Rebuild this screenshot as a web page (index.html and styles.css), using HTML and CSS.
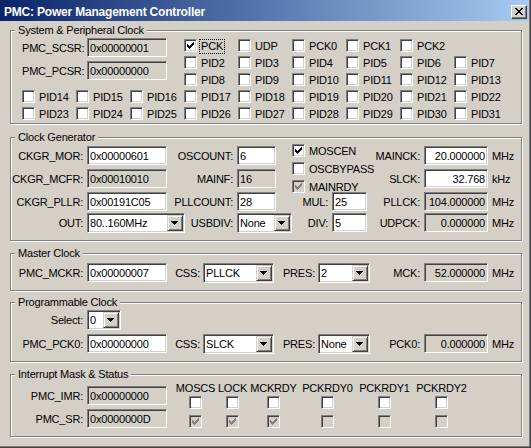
FILE: index.html
```html
<!DOCTYPE html>
<html lang="en">
<head>
<meta charset="utf-8">
<title>PMC: Power Management Controller</title>
<link rel="stylesheet" href="styles.css">
</head>
<body>
<div class="window">
<div class="frame">
  <div class="titlebar">
    <span class="title">PMC: Power Management Controller</span>
    <span class="close"><svg width="14" height="12" viewBox="0 0 14 12"><path d="M3 2h2v1h-2z M9 2h2v1h-2z M4 3h2v1h-2z M8 3h2v1h-2z M5 4h4v1h-4z M6 5h2v1h-2z M5 6h4v1h-4z M4 7h2v1h-2z M8 7h2v1h-2z M3 8h2v1h-2z M9 8h2v1h-2z"/></svg></span>
  </div>
  <div class="client">

    <fieldset class="group g-sys">
      <legend>System &amp; Peripheral Clock</legend>
      <div class="sys-grid">
        <div class="regs">
          <span class="lbl">PMC_SCSR:</span><span class="edit ro">0x00000001</span>
          <span class="lbl">PMC_PCSR:</span><span class="edit ro">0x00000000</span>
        </div>
        <span class="cb"><span class="box"><svg width="11" height="11" viewBox="0 0 11 11"><path d="M2 4h1v3h-1z M3 5h1v3h-1z M4 6h1v3h-1z M5 5h1v3h-1z M6 4h1v3h-1z M7 3h1v3h-1z M8 2h1v3h-1z"/></svg></span><span class="txt focus">PCK</span></span>
        <span class="cb"><span class="box"></span><span class="txt">UDP</span></span>
        <span class="cb"><span class="box"></span><span class="txt">PCK0</span></span>
        <span class="cb"><span class="box"></span><span class="txt">PCK1</span></span>
        <span class="cb"><span class="box"></span><span class="txt">PCK2</span></span>

        <span class="cb c4"><span class="box"></span><span class="txt">PID2</span></span>
        <span class="cb"><span class="box"></span><span class="txt">PID3</span></span>
        <span class="cb"><span class="box"></span><span class="txt">PID4</span></span>
        <span class="cb"><span class="box"></span><span class="txt">PID5</span></span>
        <span class="cb"><span class="box"></span><span class="txt">PID6</span></span>
        <span class="cb"><span class="box"></span><span class="txt">PID7</span></span>

        <span class="cb c4"><span class="box"></span><span class="txt">PID8</span></span>
        <span class="cb"><span class="box"></span><span class="txt">PID9</span></span>
        <span class="cb"><span class="box"></span><span class="txt">PID10</span></span>
        <span class="cb"><span class="box"></span><span class="txt">PID11</span></span>
        <span class="cb"><span class="box"></span><span class="txt">PID12</span></span>
        <span class="cb"><span class="box"></span><span class="txt">PID13</span></span>

        <span class="cb c1"><span class="box"></span><span class="txt">PID14</span></span>
        <span class="cb"><span class="box"></span><span class="txt">PID15</span></span>
        <span class="cb"><span class="box"></span><span class="txt">PID16</span></span>
        <span class="cb"><span class="box"></span><span class="txt">PID17</span></span>
        <span class="cb"><span class="box"></span><span class="txt">PID18</span></span>
        <span class="cb"><span class="box"></span><span class="txt">PID19</span></span>
        <span class="cb"><span class="box"></span><span class="txt">PID20</span></span>
        <span class="cb"><span class="box"></span><span class="txt">PID21</span></span>
        <span class="cb"><span class="box"></span><span class="txt">PID22</span></span>

        <span class="cb c1"><span class="box"></span><span class="txt">PID23</span></span>
        <span class="cb"><span class="box"></span><span class="txt">PID24</span></span>
        <span class="cb"><span class="box"></span><span class="txt">PID25</span></span>
        <span class="cb"><span class="box"></span><span class="txt">PID26</span></span>
        <span class="cb"><span class="box"></span><span class="txt">PID27</span></span>
        <span class="cb"><span class="box"></span><span class="txt">PID28</span></span>
        <span class="cb"><span class="box"></span><span class="txt">PID29</span></span>
        <span class="cb"><span class="box"></span><span class="txt">PID30</span></span>
        <span class="cb"><span class="box"></span><span class="txt">PID31</span></span>
      </div>
    </fieldset>

    <fieldset class="group g-clk">
      <legend>Clock Generator</legend>
      <div class="clk-grid">
        <div class="stack">
          <span class="cb"><span class="box"><svg width="11" height="11" viewBox="0 0 11 11"><path d="M2 4h1v3h-1z M3 5h1v3h-1z M4 6h1v3h-1z M5 5h1v3h-1z M6 4h1v3h-1z M7 3h1v3h-1z M8 2h1v3h-1z"/></svg></span><span class="txt">MOSCEN</span></span>
          <span class="cb"><span class="box"></span><span class="txt">OSCBYPASS</span></span>
          <span class="cb"><span class="box dis"><svg width="11" height="11" viewBox="0 0 11 11"><path d="M2 4h1v3h-1z M3 5h1v3h-1z M4 6h1v3h-1z M5 5h1v3h-1z M6 4h1v3h-1z M7 3h1v3h-1z M8 2h1v3h-1z"/></svg></span><span class="txt">MAINRDY</span></span>
        </div>

        <span class="lbl">CKGR_MOR:</span>
        <span class="edit">0x00000601</span>
        <span class="lbl">OSCOUNT:</span>
        <span class="edit w39">6</span>
        <span class="lbl">MAINCK:</span>
        <span class="edit num">20.000000</span>
        <span class="unit">MHz</span>

        <span class="lbl">CKGR_MCFR:</span>
        <span class="edit ro">0x00010010</span>
        <span class="lbl">MAINF:</span>
        <span class="edit ro w39">16</span>
        <span class="lbl">SLCK:</span>
        <span class="edit num">32.768</span>
        <span class="unit">kHz</span>

        <span class="lbl">CKGR_PLLR:</span>
        <span class="edit">0x00191C05</span>
        <span class="lbl">PLLCOUNT:</span>
        <span class="edit w39">28</span>
        <span class="lbl">MUL:</span>
        <span class="edit w35">25</span>
        <span class="lbl">PLLCK:</span>
        <span class="edit ro num">104.000000</span>
        <span class="unit">MHz</span>

        <span class="lbl r4">OUT:</span>
        <span class="combo w98 r4"><span class="ctext">80..160MHz</span><span class="drop"><svg width="14" height="14" viewBox="0 0 14 14"><path d="M3 5h7v1h-1v1h-1v1h-1v1h-1v-1h-1v-1h-1v-1h-1z"/></svg></span></span>
        <span class="lbl r4">USBDIV:</span>
        <span class="combo w55 r4"><span class="ctext">None</span><span class="drop"><svg width="14" height="14" viewBox="0 0 14 14"><path d="M3 5h7v1h-1v1h-1v1h-1v1h-1v-1h-1v-1h-1v-1h-1z"/></svg></span></span>
        <span class="lbl r4">DIV:</span>
        <span class="edit w35 r4">5</span>
        <span class="lbl r4">UDPCK:</span>
        <span class="edit ro num r4">0.000000</span>
        <span class="unit r4">MHz</span>
      </div>
    </fieldset>

    <fieldset class="group g-mck">
      <legend>Master Clock</legend>
      <div class="mck-grid">
        <span class="lbl">PMC_MCKR:</span>
        <span class="edit">0x00000007</span>
        <span class="lbl p3">CSS:</span>
        <span class="combo w71"><span class="ctext">PLLCK</span><span class="drop"><svg width="14" height="14" viewBox="0 0 14 14"><path d="M3 5h7v1h-1v1h-1v1h-1v1h-1v-1h-1v-1h-1v-1h-1z"/></svg></span></span>
        <span class="lbl p3">PRES:</span>
        <span class="combo w52"><span class="ctext">2</span><span class="drop"><svg width="14" height="14" viewBox="0 0 14 14"><path d="M3 5h7v1h-1v1h-1v1h-1v1h-1v-1h-1v-1h-1v-1h-1z"/></svg></span></span>
        <span class="lbl">MCK:</span>
        <span class="edit ro num">52.000000</span>
        <span class="unit">MHz</span>
      </div>
    </fieldset>

    <fieldset class="group g-pck">
      <legend>Programmable Clock</legend>
      <div class="pck-grid">
        <span class="lbl">Select:</span>
        <span class="combo w34"><span class="ctext">0</span><span class="drop"><svg width="14" height="14" viewBox="0 0 14 14"><path d="M3 5h7v1h-1v1h-1v1h-1v1h-1v-1h-1v-1h-1v-1h-1z"/></svg></span></span>

        <span class="lbl c1">PMC_PCK0:</span>
        <span class="edit">0x00000000</span>
        <span class="lbl p3">CSS:</span>
        <span class="combo w71"><span class="ctext">SLCK</span><span class="drop"><svg width="14" height="14" viewBox="0 0 14 14"><path d="M3 5h7v1h-1v1h-1v1h-1v1h-1v-1h-1v-1h-1v-1h-1z"/></svg></span></span>
        <span class="lbl p3">PRES:</span>
        <span class="combo w52"><span class="ctext">None</span><span class="drop"><svg width="14" height="14" viewBox="0 0 14 14"><path d="M3 5h7v1h-1v1h-1v1h-1v1h-1v-1h-1v-1h-1v-1h-1z"/></svg></span></span>
        <span class="lbl">PCK0:</span>
        <span class="edit ro num">0.000000</span>
        <span class="unit">MHz</span>
      </div>
    </fieldset>

    <fieldset class="group g-irq">
      <legend>Interrupt Mask &amp; Status</legend>
      <div class="irq">
        <div class="irq-regs">
          <span class="lbl">PMC_IMR:</span><span class="edit ro">0x00000000</span>
          <span class="lbl">PMC_SR:</span><span class="edit ro">0x0000000D</span>
        </div>
        <div class="flags">
          <div class="flag f-moscs">
            <span class="hd">MOSCS</span>
            <span class="box"></span>
            <span class="box dis"><svg width="11" height="11" viewBox="0 0 11 11"><path d="M2 4h1v3h-1z M3 5h1v3h-1z M4 6h1v3h-1z M5 5h1v3h-1z M6 4h1v3h-1z M7 3h1v3h-1z M8 2h1v3h-1z"/></svg></span>
          </div>
          <div class="flag f-lock">
            <span class="hd">LOCK</span>
            <span class="box"></span>
            <span class="box dis"><svg width="11" height="11" viewBox="0 0 11 11"><path d="M2 4h1v3h-1z M3 5h1v3h-1z M4 6h1v3h-1z M5 5h1v3h-1z M6 4h1v3h-1z M7 3h1v3h-1z M8 2h1v3h-1z"/></svg></span>
          </div>
          <div class="flag f-mckrdy">
            <span class="hd">MCKRDY</span>
            <span class="box"></span>
            <span class="box dis"><svg width="11" height="11" viewBox="0 0 11 11"><path d="M2 4h1v3h-1z M3 5h1v3h-1z M4 6h1v3h-1z M5 5h1v3h-1z M6 4h1v3h-1z M7 3h1v3h-1z M8 2h1v3h-1z"/></svg></span>
          </div>
          <div class="flag f-rdy0">
            <span class="hd">PCKRDY0</span>
            <span class="box"></span>
            <span class="box dis"></span>
          </div>
          <div class="flag f-rdy1">
            <span class="hd">PCKRDY1</span>
            <span class="box"></span>
            <span class="box dis"></span>
          </div>
          <div class="flag f-rdy2">
            <span class="hd">PCKRDY2</span>
            <span class="box"></span>
            <span class="box dis"></span>
          </div>
        </div>
      </div>
    </fieldset>

  </div>
</div>
</div>
</body>
</html>
```

FILE: styles.css
```css
* { box-sizing: border-box; }
html, body { margin: 0; padding: 0; }
body {
  font-family: "Liberation Sans", Arial, sans-serif;
  font-size: 11px;
  letter-spacing: -0.2px;
  color: #000;
  background: #d4d0c8;
}
.window {
  width: 531px;
  height: 448px;
  background: #d4d0c8;
  border-right: 1px solid #404040;
  border-bottom: 1px solid #404040;
}
.frame {
  height: 100%;
  border-right: 1px solid #808080;
  border-bottom: 1px solid #808080;
}
.titlebar {
  display: flex;
  align-items: flex-start;
  height: 21px;
  background: linear-gradient(to right, #0a246a, #a6caf0);
  color: #fff;
}
.title {
  padding: 3px 0 0 4px;
  font-size: 12px;
  font-weight: bold;
  line-height: 18px;
  white-space: nowrap;
}
.close {
  margin: 5px 2px 0 auto;
  width: 16px;
  height: 14px;
  background: #d4d0c8;
  border: 1px solid;
  border-color: #fff #404040 #404040 #fff;
  box-shadow: inset -1px -1px #808080;
}
.close svg { display: block; }
.close path { fill: #000; }

.client { padding: 3px 7px 0 10px; }

.group {
  margin: 0;
  padding: 0;
  min-width: 0;
  border: 1px solid #808080;
  box-shadow: inset 1px 1px #fff, 1px 1px #fff;
}
.group legend {
  margin-left: 4px;
  padding: 0 3px;
  line-height: 13px;
  background: #d4d0c8;
}
.g-sys { padding: 2px 0 3px; }
.g-clk { margin-top: 7px; padding: 2px 0 7px; }
.g-mck { margin-top: 6px; padding: 3px 0 7px; }
.g-pck { margin-top: 5px; padding: 1px 0 7px; }
.g-irq { margin-top: 6px; padding: 1px 0 8px; }

/* generic controls */
.lbl {
  text-align: right;
  padding-right: 4px;
  line-height: 21px;
  white-space: nowrap;
}
.lbl.p3 { padding-right: 3px; }
.unit {
  padding-left: 4px;
  line-height: 21px;
  white-space: nowrap;
}
.edit {
  display: block;
  height: 19px;
  padding: 2px 2px 0 2px;
  line-height: 15px;
  white-space: nowrap;
  overflow: hidden;
  background: #fff;
  border: 1px solid;
  border-color: #808080 #fff #fff #808080;
  box-shadow: inset 1px 1px #404040, inset -1px -1px #d4d0c8;
}
.edit.ro { background: #d4d0c8; }
.edit.num { text-align: right; }
.w39 { width: 39px; }
.w35 { width: 35px; }
.w98 { width: 98px; }
.w55 { width: 55px; }
.w71 { width: 71px; }
.w52 { width: 52px; }
.w34 { width: 34px; }

.combo {
  display: flex;
  height: 20px;
  background: #fff;
  border: 1px solid;
  border-color: #808080 #fff #fff #808080;
  box-shadow: inset 1px 1px #404040, inset -1px -1px #d4d0c8;
}
.ctext {
  flex: 1;
  min-width: 0;
  padding: 2px 0 0 2px;
  line-height: 15px;
  white-space: nowrap;
  overflow: hidden;
}
.drop {
  flex: none;
  width: 16px;
  height: 16px;
  margin: 1px;
  background: #d4d0c8;
  border: 1px solid;
  border-color: #d4d0c8 #404040 #404040 #d4d0c8;
  box-shadow: inset 1px 1px #fff, inset -1px -1px #808080;
}
.drop svg { display: block; }
.drop path { fill: #000; }

.cb {
  display: flex;
  align-items: flex-start;
  gap: 2px;
  white-space: nowrap;
}
.box {
  display: block;
  flex: none;
  width: 13px;
  height: 13px;
  background: #fff;
  border: 1px solid;
  border-color: #808080 #fff #fff #808080;
  box-shadow: inset 1px 1px #404040, inset -1px -1px #d4d0c8;
}
.box svg { display: block; }
.box path { fill: #000; }
.box.dis { background: #d4d0c8; }
.box.dis path { fill: #808080; }
.txt {
  padding: 0 1px;
  border: 1px solid transparent;
  line-height: 13px;
}
.txt.focus { border: 1px dotted #000; }

/* System & Peripheral Clock */
.sys-grid {
  margin-left: 11px;
  display: grid;
  grid-template-columns: repeat(9, 54px);
  grid-template-rows: repeat(5, 13px);
  row-gap: 4px;
}
.regs {
  grid-column: 1 / 4;
  grid-row: 1 / 4;
  margin-top: -1px;
  display: grid;
  grid-template-columns: 65px 80px;
  grid-auto-rows: 19px;
  row-gap: 4px;
  align-content: start;
}
.c1 { grid-column-start: 1; }
.c4 { grid-column-start: 4; }

/* Clock Generator */
.clk-grid {
  display: grid;
  grid-template-columns: 76px 80px 70px 55px 40px 38px 54px 64px auto;
  grid-template-rows: 19px 19px 19px 18px;
  row-gap: 4px;
  justify-items: start;
}
.clk-grid .lbl, .clk-grid .edit:not([class*="w"]) { justify-self: stretch; }
.r4 { margin-top: -2px; }
.stack {
  grid-column: 5 / 7;
  grid-row: 1 / 3;
  margin-top: -2px;
  display: flex;
  flex-direction: column;
  gap: 3px;
}

/* Master / Programmable clock */
.mck-grid, .pck-grid {
  display: grid;
  grid-template-columns: 76px 80px 36px 71px 44px 52px 54px 64px auto;
  grid-template-rows: 20px;
  row-gap: 4px;
  align-items: start;
}
.pck-grid { grid-template-rows: 20px 20px; }
.mck-grid .combo, .pck-grid .combo { justify-self: start; }

/* Interrupt Mask & Status */
.irq { display: flex; }
.irq-regs {
  margin-top: 4px;
  display: grid;
  grid-template-columns: 76px 80px;
  grid-auto-rows: 19px;
  row-gap: 4px;
}
.flags { margin-left: 8px; display: flex; }
.flag {
  display: flex;
  flex-direction: column;
  align-items: center;
}
.flag .hd { line-height: 13px; white-space: nowrap; }
.flag .box { margin-top: 1px; }
.flag .box + .box { margin-top: 6px; }
.f-moscs { width: 41px; }
.f-lock { width: 33px; }
.f-mckrdy { width: 49px; }
.f-rdy0 { width: 59px; }
.f-rdy1 { width: 55px; }
.f-rdy2 { width: 59px; }
```
